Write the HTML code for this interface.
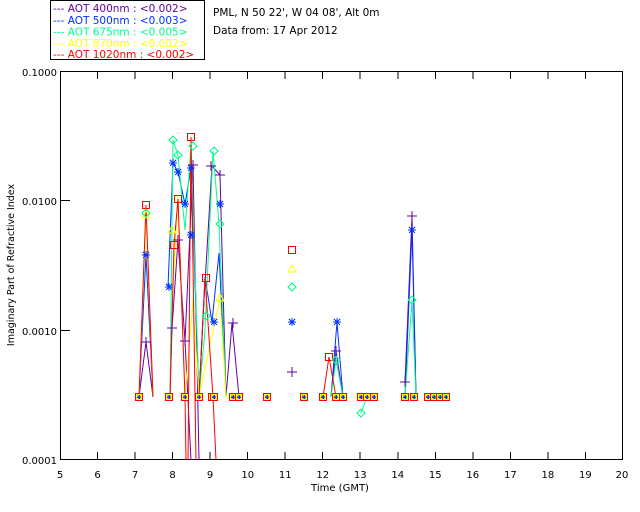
<!DOCTYPE html>
<html><head><meta charset="utf-8"><style>
html,body{margin:0;padding:0;background:#fff;}
svg{display:block;font-family:"DejaVu Sans","Liberation Sans",sans-serif;}
</style></head><body>
<svg width="640" height="512" viewBox="0 0 640 512" xmlns="http://www.w3.org/2000/svg" shape-rendering="crispEdges">
<defs>
<g id="sq"><rect x="-3.5" y="-3.5" width="7" height="7" fill="none" stroke="#f00" stroke-width="1.2"/></g>
<g id="tri"><path d="M0,-4 L4,3 L-4,3 Z" fill="none" stroke="#ff0" stroke-width="1"/></g>
<g id="dia"><path d="M0,-4 L4,0 L0,4 L-4,0 Z" fill="none" stroke="#0f8" stroke-width="1"/></g>
<g id="st"><path d="M-4,0H4M0,-4V4M-3,-3L3,3M-3,3L3,-3" stroke="#03f" stroke-width="1.2"/></g>
<g id="pl"><path d="M-5,0H5M0,-5V5" stroke="#60a" stroke-width="1.2"/></g>
<g id="bm"><rect x="-3.5" y="-3.5" width="7" height="7" fill="#ff0" stroke="#f00" stroke-width="1.4"/><path d="M-2,0H2M0,-2V2" stroke="#03f" stroke-width="1.5"/><path d="M-2,-2h1M1,1h1" stroke="#0f8"/></g>
</defs>
<!-- legend -->
<rect x="50.5" y="0.5" width="154" height="59" fill="none" stroke="#000"/>
<g font-size="10.5">
<text x="53" y="12" fill="#60a">--- AOT  400nm : &lt;0.002&gt;</text>
<text x="53" y="24" fill="#03f">--- AOT  500nm : &lt;0.003&gt;</text>
<text x="53" y="35.5" fill="#0f8">--- AOT  675nm : &lt;0.005&gt;</text>
<text x="53" y="47" fill="#ff0">--- AOT  870nm : &lt;0.002&gt;</text>
<text x="53" y="58" fill="#f00">--- AOT 1020nm : &lt;0.002&gt;</text>
</g>
<text x="213" y="16" font-size="10.5">PML, N 50 22', W 04 08', Alt 0m</text>
<text x="213" y="34" font-size="10.5">Data from: 17 Apr 2012</text>
<!-- axes -->
<rect x="60.5" y="71.5" width="562" height="388" fill="none" stroke="#000"/>
<g stroke="#000">
<path d="M60,200.5h10M60,330.5h10"/>
<path d="M97.5,460v-8M135.1,460v-8M172.6,460v-8M210.1,460v-8M247.7,460v-8M285.2,460v-8M322.7,460v-8M360.2,460v-8M397.8,460v-8M435.3,460v-8M472.8,460v-8M510.4,460v-8M547.9,460v-8M585.4,460v-8"/>
<path d="M97.5,71v8M135.1,71v8M172.6,71v8M210.1,71v8M247.7,71v8M285.2,71v8M322.7,71v8M360.2,71v8M397.8,71v8M435.3,71v8M472.8,71v8M510.4,71v8M547.9,71v8M585.4,71v8"/>
</g>
<g font-size="10" text-anchor="end">
<text x="57" y="76">0.1000</text><text x="57" y="205">0.0100</text><text x="57" y="335">0.0010</text><text x="57" y="464">0.0001</text>
</g>
<g font-size="10" text-anchor="middle">
<text x="60" y="478">5</text><text x="97.5" y="478">6</text><text x="135" y="478">7</text><text x="172.6" y="478">8</text><text x="210" y="478">9</text><text x="247.7" y="478">10</text><text x="285.2" y="478">11</text><text x="322.7" y="478">12</text><text x="360.2" y="478">13</text><text x="397.8" y="478">14</text><text x="435.3" y="478">15</text><text x="472.8" y="478">16</text><text x="510.4" y="478">17</text><text x="547.9" y="478">18</text><text x="585.4" y="478">19</text><text x="622" y="478">20</text>
<text x="340" y="491">Time (GMT)</text>
</g>
<text transform="translate(14,265) rotate(-90)" font-size="9.5" text-anchor="middle">Imaginary Part of Refractive Index</text>
<!-- lines -->
<g fill="none" stroke-width="1" shape-rendering="auto">
<polyline stroke="#60a" points="139,397 146,342 153,397"/>
<polyline stroke="#60a" points="170,397 172,328 178,240 185,341 191,460"/>
<polyline stroke="#60a" points="199,397 204,300 212,166 220,175 226,397 232,323 239,397"/>
<polyline stroke="#60a" points="185,341 193,165 199,460"/>
<polyline stroke="#60a" points="331,397 336,351 343,397"/>
<polyline stroke="#60a" points="405,382 412,216 416,397"/>
<polyline stroke="#03f" points="139,397 146,255 153,397"/>
<polyline stroke="#03f" points="168,287 173,163 178,172 185,204 191,168 199,397 205,277 212,322 219,253 226,397"/>
<polyline stroke="#03f" points="331,397 337,322 343,397"/>
<polyline stroke="#03f" points="405,397 412,230 416,397"/>
<polyline stroke="#0f8" points="139,397 146,215 153,397"/>
<polyline stroke="#0f8" points="170,397 173,140 178,155 185,230 191,146 199,397 205,330 213,151 219,224 226,397"/>
<polyline stroke="#0f8" points="331,397 336,360 343,397"/>
<polyline stroke="#0f8" points="361,413 367,397"/>
<polyline stroke="#0f8" points="405,397 412,300 416,397"/>
<polyline stroke="#ff0" points="139,397 146,215 153,397"/>
<polyline stroke="#ff0" points="172,310 178,195 185,397 193,300 199,397 220,298 226,397"/>
<polyline stroke="#f00" points="139,397 146,205 153,397"/>
<polyline stroke="#f00" points="170,397 174,245 178,199 185,397 186,460"/>
<polyline stroke="#f00" points="188,460 191,137 196,460"/>
<polyline stroke="#f00" points="199,397 205,278 213,397 216,460"/>
<polyline stroke="#f00" points="323,397 329,357 336,397"/>
</g>
<!-- markers -->
<use href="#sq" x="146" y="205"/><use href="#tri" x="146" y="215"/><use href="#dia" x="146" y="213"/><use href="#st" x="146" y="255"/><use href="#pl" x="146" y="342"/>
<use href="#sq" x="174" y="245"/><use href="#st" x="169" y="287"/><use href="#dia" x="173" y="140"/><use href="#st" x="173" y="163"/><use href="#pl" x="172" y="328"/><use href="#tri" x="172" y="230"/>
<use href="#sq" x="178" y="199"/><use href="#dia" x="178" y="155"/><use href="#st" x="178" y="172"/><use href="#pl" x="178" y="240"/>
<use href="#st" x="185" y="204"/><use href="#pl" x="185" y="341"/>
<use href="#sq" x="191" y="137"/><use href="#dia" x="193" y="146"/><use href="#st" x="191" y="168"/><use href="#st" x="191" y="235"/><use href="#pl" x="193" y="165"/>
<use href="#sq" x="206" y="278"/><use href="#dia" x="206" y="316"/><use href="#pl" x="211" y="166"/><use href="#pl" x="220" y="175"/>
<use href="#dia" x="214" y="151"/><use href="#st" x="220" y="204"/><use href="#dia" x="220" y="224"/><use href="#tri" x="220" y="298"/><use href="#st" x="214" y="322"/>
<use href="#pl" x="233" y="323"/>
<use href="#sq" x="292" y="250"/><use href="#tri" x="292" y="269"/><use href="#dia" x="292" y="287"/><use href="#st" x="292" y="322"/><use href="#pl" x="292" y="372"/>
<use href="#st" x="337" y="322"/><use href="#sq" x="329" y="357"/><use href="#pl" x="336" y="351"/><use href="#dia" x="336" y="360"/>
<use href="#dia" x="361" y="413"/>
<use href="#pl" x="412" y="216"/><use href="#st" x="412" y="230"/><use href="#dia" x="412" y="300"/><use href="#pl" x="405" y="382"/>
<!-- baseline markers -->
<use href="#bm" x="139" y="397"/><use href="#bm" x="169" y="397"/><use href="#bm" x="185" y="397"/><use href="#bm" x="199" y="397"/><use href="#bm" x="212" y="397"/><use href="#bm" x="214" y="397"/><use href="#bm" x="233" y="397"/><use href="#bm" x="239" y="397"/>
<use href="#bm" x="267" y="397"/><use href="#bm" x="304" y="397"/><use href="#bm" x="323" y="397"/><use href="#bm" x="336" y="397"/><use href="#bm" x="343" y="397"/><use href="#bm" x="361" y="397"/><use href="#bm" x="367" y="397"/><use href="#bm" x="374" y="397"/>
<use href="#bm" x="405" y="397"/><use href="#bm" x="414" y="397"/><use href="#bm" x="428" y="397"/><use href="#bm" x="434" y="397"/><use href="#bm" x="440" y="397"/><use href="#bm" x="446" y="397"/>
</svg>
</body></html>
